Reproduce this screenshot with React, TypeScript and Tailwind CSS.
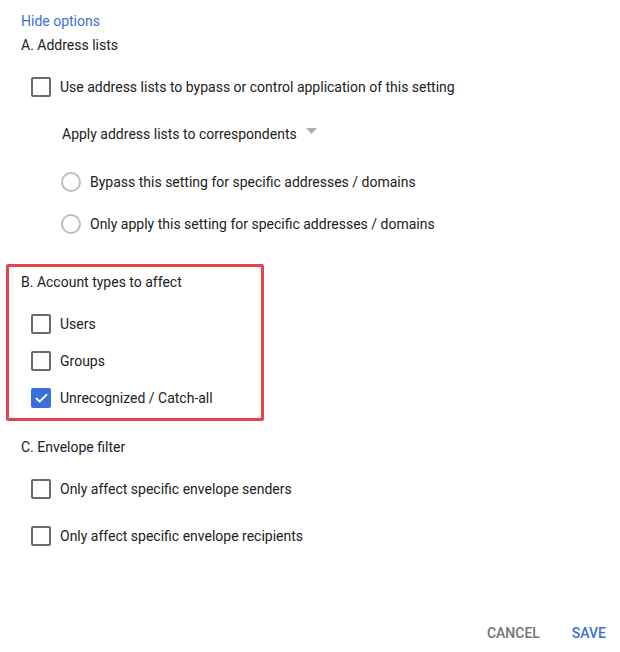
import { Check } from "lucide-react"

function Checkbox({ checked = false }: { checked?: boolean }) {
  if (checked) {
    return (
      <span className="flex h-[20px] w-[20px] shrink-0 items-center justify-center rounded-[2px] bg-[#3b6fd8]">
        <Check className="h-[15px] w-[15px] text-white" strokeWidth={3} />
      </span>
    )
  }
  return <span className="h-[20px] w-[20px] shrink-0 rounded-[2px] border-2 border-[#6b6b6b]" />
}

function Radio() {
  return <span className="h-[20px] w-[20px] shrink-0 rounded-full border-2 border-[#bdbdbd]" />
}

function CheckRow({ label, checked, className = "" }: { label: string; checked?: boolean; className?: string }) {
  return (
    <label className={`flex h-[20px] items-center pl-[10px] ${className}`}>
      <Checkbox checked={checked} />
      <span className="ml-[9px]">{label}</span>
    </label>
  )
}

function RadioRow({ label, className = "" }: { label: string; className?: string }) {
  return (
    <label className={`flex h-[20px] items-center pl-[40px] ${className}`}>
      <Radio />
      <span className="ml-[9px]">{label}</span>
    </label>
  )
}

export default function App() {
  return (
    <div className="flex h-[652px] w-[620px] flex-col bg-white px-[6px] pt-[11px] font-['Roboto',sans-serif] text-[14px] leading-[20px] text-[#212121]">
      <div className="px-[15px]">
        <a href="#" className="block h-[20px] text-[#3b6fd8]">
          Hide options
        </a>
        <div className="mt-[4px] h-[20px]">A. Address lists</div>

        <CheckRow className="mt-[22px]" label="Use address lists to bypass or control application of this setting" />

        <div className="mt-[27px] flex h-[20px] items-center pl-[41px]">
          <span>Apply address lists to correspondents</span>
          <svg className="mb-[7px] ml-[9px]" width="11" height="6" viewBox="0 0 11 6">
            <path d="M0 0h11L5.5 6z" fill="#b0b0b0" />
          </svg>
        </div>

        <RadioRow className="mt-[28px]" label="Bypass this setting for specific addresses / domains" />
        <RadioRow className="mt-[22px]" label="Only apply this setting for specific addresses / domains" />
      </div>

      <section className="mt-[30px] w-[258px] rounded-[2px] border-[3px] border-[#e8404f] px-[12px] pb-[10px] pt-[5px]">
        <div className="h-[20px]">B. Account types to affect</div>
        <CheckRow className="mt-[22px]" label="Users" />
        <CheckRow className="mt-[17px]" label="Groups" />
        <CheckRow className="mt-[17px]" label="Unrecognized / Catch-all" checked />
      </section>

      <div className="mt-[16px] px-[15px]">
        <div className="h-[20px]">C. Envelope filter</div>
        <CheckRow className="mt-[22px]" label="Only affect specific envelope senders" />
        <CheckRow className="mt-[27px]" label="Only affect specific envelope recipients" />
      </div>

      <div className="mt-[77px] flex h-[20px] items-center justify-end gap-[32px] pr-[8px] font-medium">
        <button className="text-[#757575]">CANCEL</button>
        <button className="text-[#3b6fd8]">SAVE</button>
      </div>
    </div>
  )
}
